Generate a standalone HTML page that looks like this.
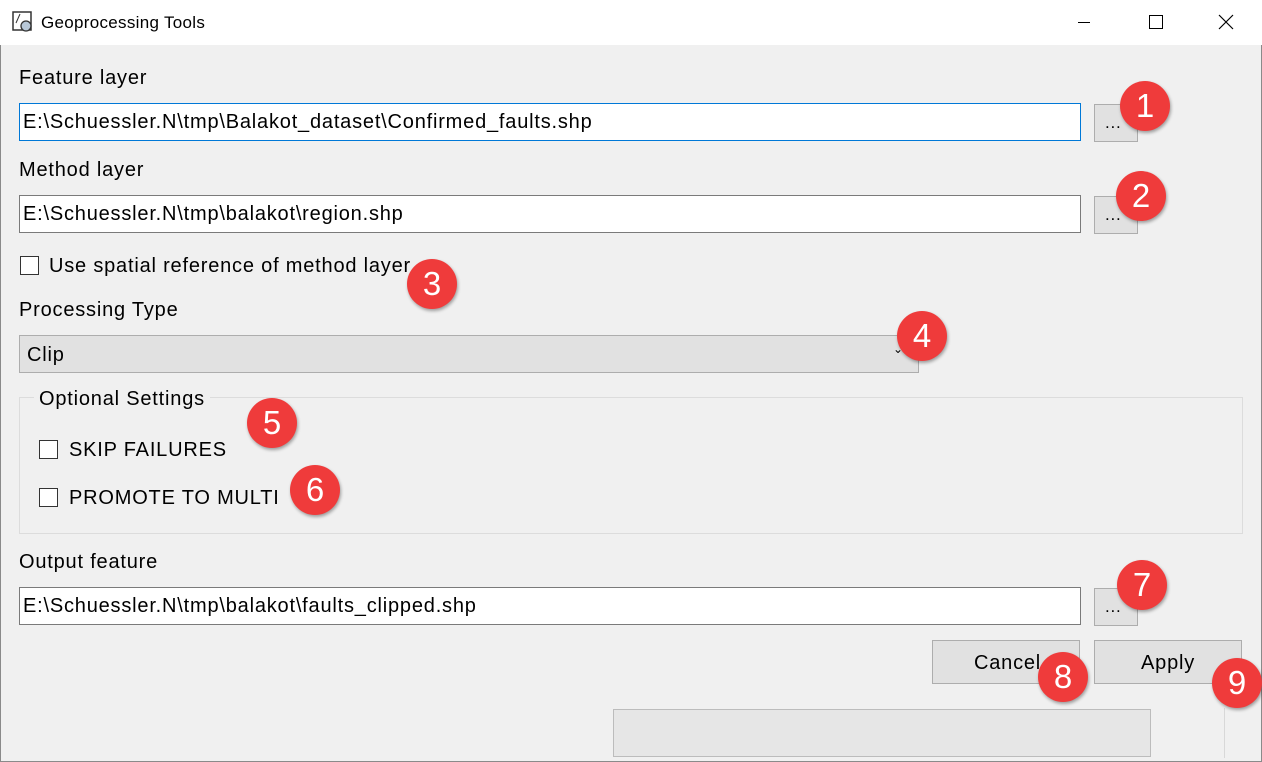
<!DOCTYPE html>
<html><head><meta charset="utf-8"><style>
*{box-sizing:border-box;margin:0;padding:0}
body{width:1262px;height:762px;background:#f0f0f0;font-family:"Liberation Sans",sans-serif;position:relative;overflow:hidden;color:#000}
.win{position:absolute;left:0;top:0;width:1262px;height:762px;border:1px solid #8a8a8a}
.title{position:absolute;left:0;top:0;width:1262px;height:45px;background:#fff}
.t{position:absolute;font-size:20px;letter-spacing:0.8px;white-space:nowrap}
.inp{position:absolute;background:#fff;border:1px solid #7a7a7a;height:38px;font-size:20px;letter-spacing:0.8px;padding:7px 0 0 3px;white-space:nowrap}
.btn{position:absolute;background:#e1e1e1;border:1px solid #adadad}
.cb{position:absolute;width:19px;height:19px;border:1px solid #333;background:#fff}
.b{position:absolute;width:50px;height:50px;border-radius:50%;background:#ef3b3b;color:#fff;font-size:33px;text-align:center;line-height:50px;box-shadow:1px 2px 3px rgba(0,0,0,.35);font-family:"Liberation Sans",sans-serif}
</style></head><body>
<div class="win"></div>
<div class="title"></div>
<svg style="position:absolute;left:12px;top:11px" width="22" height="22"><rect x="1" y="1" width="18" height="18" fill="none" stroke="#333" stroke-width="1.5"/><line x1="4" y1="12" x2="8" y2="3" stroke="#333"/><circle cx="14" cy="15" r="5" fill="#b8c8d8" stroke="#333" stroke-width="1.3"/></svg>
<div class="t" style="left:41px;top:13px;font-size:17px;letter-spacing:0.3px">Geoprocessing Tools</div>
<div style="position:absolute;left:1078px;top:22px;width:12px;height:1px;background:#000"></div>
<div style="position:absolute;left:1149px;top:15px;width:14px;height:14px;border:1px solid #000"></div>
<svg style="position:absolute;left:1218px;top:14px" width="16" height="16"><path d="M1 1L15 15M15 1L1 15" stroke="#000" stroke-width="1.2"/></svg>

<div class="t" style="left:19px;top:67px">Feature layer</div>
<div class="inp" style="left:19px;top:103px;width:1062px;border-color:#0078d7">E:\Schuessler.N\tmp\Balakot_dataset\Confirmed_faults.shp</div>
<div class="btn" style="left:1094px;top:104px;width:44px;height:38px"><span class="t" style="left:10px;top:8px;font-size:17px">...</span></div>

<div class="t" style="left:19px;top:159px">Method layer</div>
<div class="inp" style="left:19px;top:195px;width:1062px">E:\Schuessler.N\tmp\balakot\region.shp</div>
<div class="btn" style="left:1094px;top:196px;width:44px;height:38px"><span class="t" style="left:10px;top:8px;font-size:17px">...</span></div>

<div class="cb" style="left:20px;top:256px"></div>
<div class="t" style="left:49px;top:255px">Use spatial reference of method layer</div>

<div class="t" style="left:19px;top:299px">Processing Type</div>
<div class="btn" style="left:19px;top:335px;width:900px;height:38px"><span class="t" style="left:7px;top:8px">Clip</span><span class="t" style="left:873px;top:6px;font-size:12px">⌄</span></div>

<div style="position:absolute;left:19px;top:397px;width:1224px;height:137px;border:1px solid #dcdcdc"></div>
<div class="t" style="left:34px;top:388px;background:#f0f0f0;padding:0 5px">Optional Settings</div>
<div class="cb" style="left:39px;top:440px"></div>
<div class="t" style="left:69px;top:439px">SKIP FAILURES</div>
<div class="cb" style="left:39px;top:488px"></div>
<div class="t" style="left:69px;top:487px">PROMOTE TO MULTI</div>

<div class="t" style="left:19px;top:551px">Output feature</div>
<div class="inp" style="left:19px;top:587px;width:1062px">E:\Schuessler.N\tmp\balakot\faults_clipped.shp</div>
<div class="btn" style="left:1094px;top:588px;width:44px;height:38px"><span class="t" style="left:10px;top:8px;font-size:17px">...</span></div>

<div class="btn" style="left:932px;top:640px;width:148px;height:44px"><span class="t" style="left:41px;top:11px">Cancel</span></div>
<div class="btn" style="left:1094px;top:640px;width:148px;height:44px"><span class="t" style="left:46px;top:11px">Apply</span></div>

<div style="position:absolute;left:613px;top:709px;width:538px;height:48px;background:#e6e6e6;border:1px solid #bcbcbc"></div>
<div style="position:absolute;left:1224px;top:708px;width:1px;height:50px;background:#d8d8d8"></div>

<div class="b" style="left:1120px;top:81px">1</div>
<div class="b" style="left:1116px;top:171px">2</div>
<div class="b" style="left:407px;top:259px">3</div>
<div class="b" style="left:897px;top:311px">4</div>
<div class="b" style="left:247px;top:398px">5</div>
<div class="b" style="left:290px;top:465px">6</div>
<div class="b" style="left:1117px;top:560px">7</div>
<div class="b" style="left:1038px;top:652px">8</div>
<div class="b" style="left:1212px;top:658px">9</div>
</body></html>
